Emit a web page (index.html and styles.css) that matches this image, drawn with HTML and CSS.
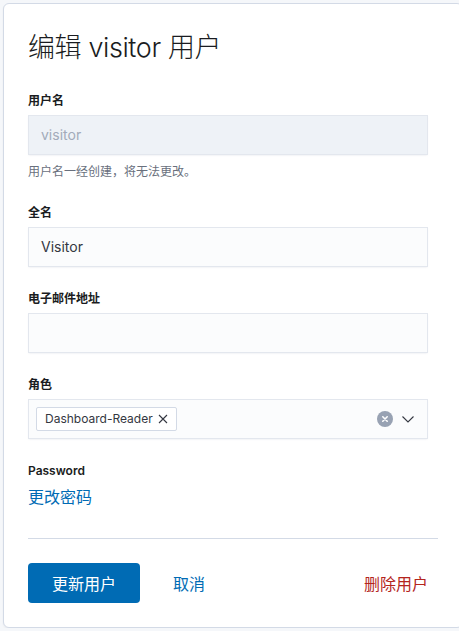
FILE: index.html
```html
<!DOCTYPE html>
<html lang="zh-CN">
<head>
    <meta charset="UTF-8">
    <meta name="viewport" content="width=device-width, initial-scale=1.0">
    <title>编辑 visitor 用户</title>
    <link rel="stylesheet" href="styles.css">
</head>
<body>
    <div class="panel">
        <h1 class="title">编辑 visitor 用户</h1>

        <div class="form-row first">
            <label class="form-label">用户名</label>
            <div class="field disabled">visitor</div>
            <div class="help-text">用户名一经创建，将无法更改。</div>
        </div>

        <div class="form-row">
            <label class="form-label">全名</label>
            <div class="field">Visitor</div>
        </div>

        <div class="form-row">
            <label class="form-label">电子邮件地址</label>
            <div class="field"></div>
        </div>

        <div class="form-row">
            <label class="form-label">角色</label>
            <div class="field combo">
                <span class="badge">Dashboard-Reader
                    <svg class="badge-x" width="10" height="10" viewBox="0 0 10 10"><path d="M1 1 L9 9 M9 1 L1 9" stroke="#343741" stroke-width="1.1" fill="none"/></svg>
                </span>
                <span class="combo-icons">
                    <svg width="16" height="16" viewBox="0 0 16 16"><circle cx="8" cy="8" r="8" fill="#98a2b3"/><path d="M5.8 5.8 L10.2 10.2 M10.2 5.8 L5.8 10.2" stroke="#fff" stroke-width="1.6" stroke-linecap="round"/></svg>
                    <svg width="14" height="14" viewBox="0 0 14 14"><path d="M1.5 4.5 L7 10 L12.5 4.5" stroke="#343741" stroke-width="1.1" fill="none"/></svg>
                </span>
            </div>
        </div>

        <div class="form-row password-row">
            <div class="small-label">Password</div>
            <a class="link change-pw" href="#">更改密码</a>
        </div>

        <hr class="divider">

        <div class="footer">
            <button class="button">更新用户</button>
            <a class="link cancel" href="#">取消</a>
            <a class="link delete" href="#">删除用户</a>
        </div>
    </div>
</body>
</html>
```

FILE: styles.css
```css
html, body {
    overflow: hidden;
}
body {
    margin: 0;
    padding: 3px 0 0 3px;
    background-color: #f5f7fa;
    font-family: Inter, "Noto Sans CJK SC", sans-serif;
    color: #343741;
}
.panel {
    width: 410px;
    padding: 24px;
    background-color: white;
    border: 1px solid #d3dae6;
    border-radius: 6px;
    box-shadow: 0 1px 2px rgba(0,0,0,0.05);
}
.title {
    margin: 0;
    font-size: 27px;
    line-height: 40px;
    font-weight: 300;
    letter-spacing: -0.4px;
    color: #1a1c21;
}
.form-row {
    max-width: 400px;
    margin-top: 22px;
}
.form-row.first {
    margin-top: 23px;
}
.form-label {
    display: block;
    font-size: 12px;
    line-height: 20px;
    font-weight: 700;
    color: #1a1c21;
    margin-bottom: 4px;
}
.field {
    box-sizing: border-box;
    height: 40px;
    padding: 0 12px;
    background-color: #fbfcfd;
    border: 1px solid #e3e7ee;
    box-shadow: 0 1px 2px -1px rgba(152,162,179,0.3);
    font-size: 14px;
    line-height: 38px;
    color: #343741;
}
.field.disabled {
    background-color: #eef2f7;
    color: #a2abba;
}
.help-text {
    margin-top: 8px;
    font-size: 12px;
    line-height: 18px;
    color: #69707d;
}
.combo {
    display: flex;
    align-items: center;
    justify-content: space-between;
    padding: 0 12px 0 7px;
}
.badge {
    display: flex;
    align-items: center;
    height: 24px;
    box-sizing: border-box;
    padding: 0 8px;
    background-color: white;
    border: 1px solid #d3dae6;
    border-radius: 2px;
    font-size: 12px;
    line-height: 22px;
}
.badge-x {
    margin-left: 5px;
}
.combo-icons {
    display: flex;
    align-items: center;
    gap: 8px;
}
.password-row {
    margin-top: 22px;
}
.small-label {
    font-size: 12px;
    line-height: 20px;
    font-weight: 600;
    color: #1a1c21;
}
.link {
    color: #006bb4;
    text-decoration: none;
    font-size: 16px;
}
.change-pw {
    display: block;
    margin-top: 4px;
    line-height: 24px;
}
.divider {
    margin: 29px 0 24px;
    border: none;
    border-top: 1px solid #d3dae6;
}
.footer {
    display: flex;
    align-items: center;
    max-width: 400px;
}
.button {
    width: 112px;
    height: 40px;
    background-color: #006bb4;
    color: white;
    border: none;
    border-radius: 4px;
    font-family: inherit;
    font-size: 16px;
    cursor: pointer;
}
.cancel {
    margin-left: 33px;
}
.delete {
    margin-left: auto;
    color: #b4251d;
}
```
